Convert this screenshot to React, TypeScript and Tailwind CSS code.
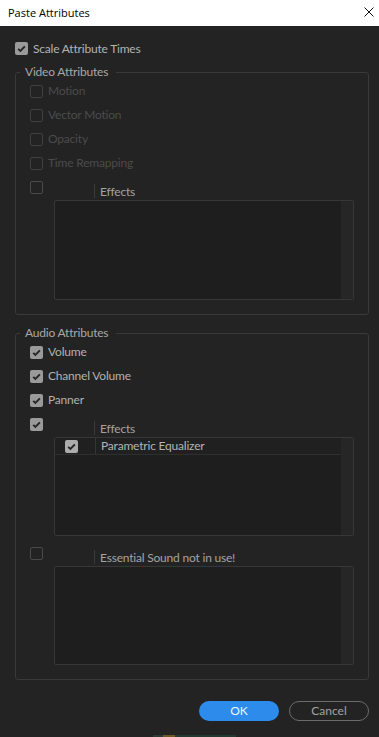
import clsx from "clsx";

function Box({ checked, dim, light }: { checked?: boolean; dim?: boolean; light?: boolean }) {
  return (
    <span
      className={clsx(
        "flex h-[13px] w-[13px] shrink-0 items-center justify-center rounded-[2px]",
        checked && !light && "bg-[#9a9a9a]",
        checked && light && "bg-[#acacac]",
        !checked && dim && "border border-[#3f3f3f]",
        !checked && !dim && "border border-[#4a4a4a]"
      )}
    >
      {checked && (
        <svg width="13" height="13" viewBox="0 0 13 13">
          <path d="M3.2 6.8 L5.4 9 L9.9 4.3" fill="none" stroke="#262626" strokeWidth="1.9" />
        </svg>
      )}
    </span>
  );
}

function Row({ label, checked, dim }: { label: string; checked?: boolean; dim?: boolean }) {
  return (
    <div className="flex h-6 items-start">
      <div className="mt-[5px]">
        <Box checked={checked} dim={dim} />
      </div>
      <span
        className={clsx(
          "ml-[5px] mt-[3px] leading-[16px]",
          dim ? "text-[#4b4b4b]" : "text-[#b2b2b2]"
        )}
      >
        {label}
      </span>
    </div>
  );
}

function Tree({
  checked,
  title,
  items,
  listH,
}: {
  checked?: boolean;
  title: string;
  items: string[];
  listH: string;
}) {
  return (
    <div className="flex items-start">
      <div className="mt-[5px]">
        <Box checked={checked} />
      </div>
      <div className="ml-[11px] mt-[6px] flex-1">
        <div className="flex h-[18px] items-stretch">
          <div className="flex w-[41px] justify-end py-[2px]">
            <span className="w-px bg-[#3a3a3a]" />
          </div>
          <span className="pl-[5px] pt-[2px] leading-[16px] text-[#a3a3a3]">{title}</span>
        </div>
        <div
          className={clsx(
            "flex overflow-hidden rounded-[2px] border border-[#373737] bg-[#1e1e1e]",
            listH
          )}
        >
          <div className="flex-1">
            {items.map((it) => (
              <div key={it} className="flex h-[17px] border-b border-[#2f2f2f] bg-[#202020]">
                <div className="flex w-[40px] items-center pl-[10px]">
                  <Box checked light />
                </div>
                <span className="w-px bg-[#353535]" />
                <span className="pl-[5px] leading-[16px] text-[#b4b4b4]">{it}</span>
              </div>
            ))}
          </div>
          <div className="w-[12px] bg-[#262626]" />
        </div>
      </div>
    </div>
  );
}

function Group({ title, children, className }: { title: string; children: React.ReactNode; className?: string }) {
  return (
    <fieldset className={clsx("rounded-[3px] border border-[#393939] p-0", className)}>
      <legend className="ml-[4px] pl-[5px] pr-[8px] leading-[16px] text-[#a8a8a8]">{title}</legend>
      <div className="px-[14px] pb-[14px]">{children}</div>
    </fieldset>
  );
}

export default function App() {
  return (
    <div
      className="min-h-screen bg-[#232323] text-[12px] tracking-[-0.2px]"
      style={{ fontFamily: "Lato, 'Noto Sans', sans-serif" }}
    >
      {/* title bar */}
      <div className="flex h-[26px] items-center justify-between bg-white pl-[8px] pr-[5px] tracking-normal">
        <span className="text-[11px] text-black" style={{ fontFamily: "'Open Sans', 'Noto Sans', sans-serif" }}>
          Paste Attributes
        </span>
        <svg width="10" height="10" viewBox="0 0 10 10" className="mb-[2px]">
          <path d="M0.5 0.5 L9.5 9.5 M9.5 0.5 L0.5 9.5" stroke="#111" strokeWidth="1" />
        </svg>
      </div>

      <div className="pl-[15px] pr-[10px]">
        <div className="mt-[16px] flex h-[13px] items-center">
          <Box checked />
          <span className="ml-[5px] leading-[16px] text-[#b2b2b2]">Scale Attribute Times</span>
        </div>

        <Group title="Video Attributes" className="mt-[9px]">
          <Row label="Motion" dim />
          <Row label="Vector Motion" dim />
          <Row label="Opacity" dim />
          <Row label="Time Remapping" dim />
          <Tree title="Effects" items={[]} listH="h-[100px]" />
        </Group>

        <Group title="Audio Attributes" className="mt-[10px]">
          <Row label="Volume" checked />
          <Row label="Channel Volume" checked />
          <Row label="Panner" checked />
          <Tree checked title="Effects" items={["Parametric Equalizer"]} listH="h-[99px]" />
          <div className="mt-[6px]">
            <Tree title="Essential Sound not in use!" items={[]} listH="h-[99px]" />
          </div>
        </Group>

        <div className="mt-[21px] flex justify-end gap-[10px] tracking-normal">
          <button className="h-[20px] w-[80px] rounded-full bg-[#2d8ceb] leading-[20px] text-[#eef5fd]">OK</button>
          <button className="h-[20px] w-[80px] rounded-full border border-[#6c6c6c] leading-[18px] text-[#a3a3a3]">
            Cancel
          </button>
        </div>

        <div className="ml-[138px] mt-[14px] flex h-[2px] w-[83px]">
          <div className="w-[10px] bg-[#2a3b33]" />
          <div className="w-[12px] bg-[#6a5a22]" />
          <div className="flex-1 bg-[#24392f]" />
        </div>
      </div>
    </div>
  );
}
